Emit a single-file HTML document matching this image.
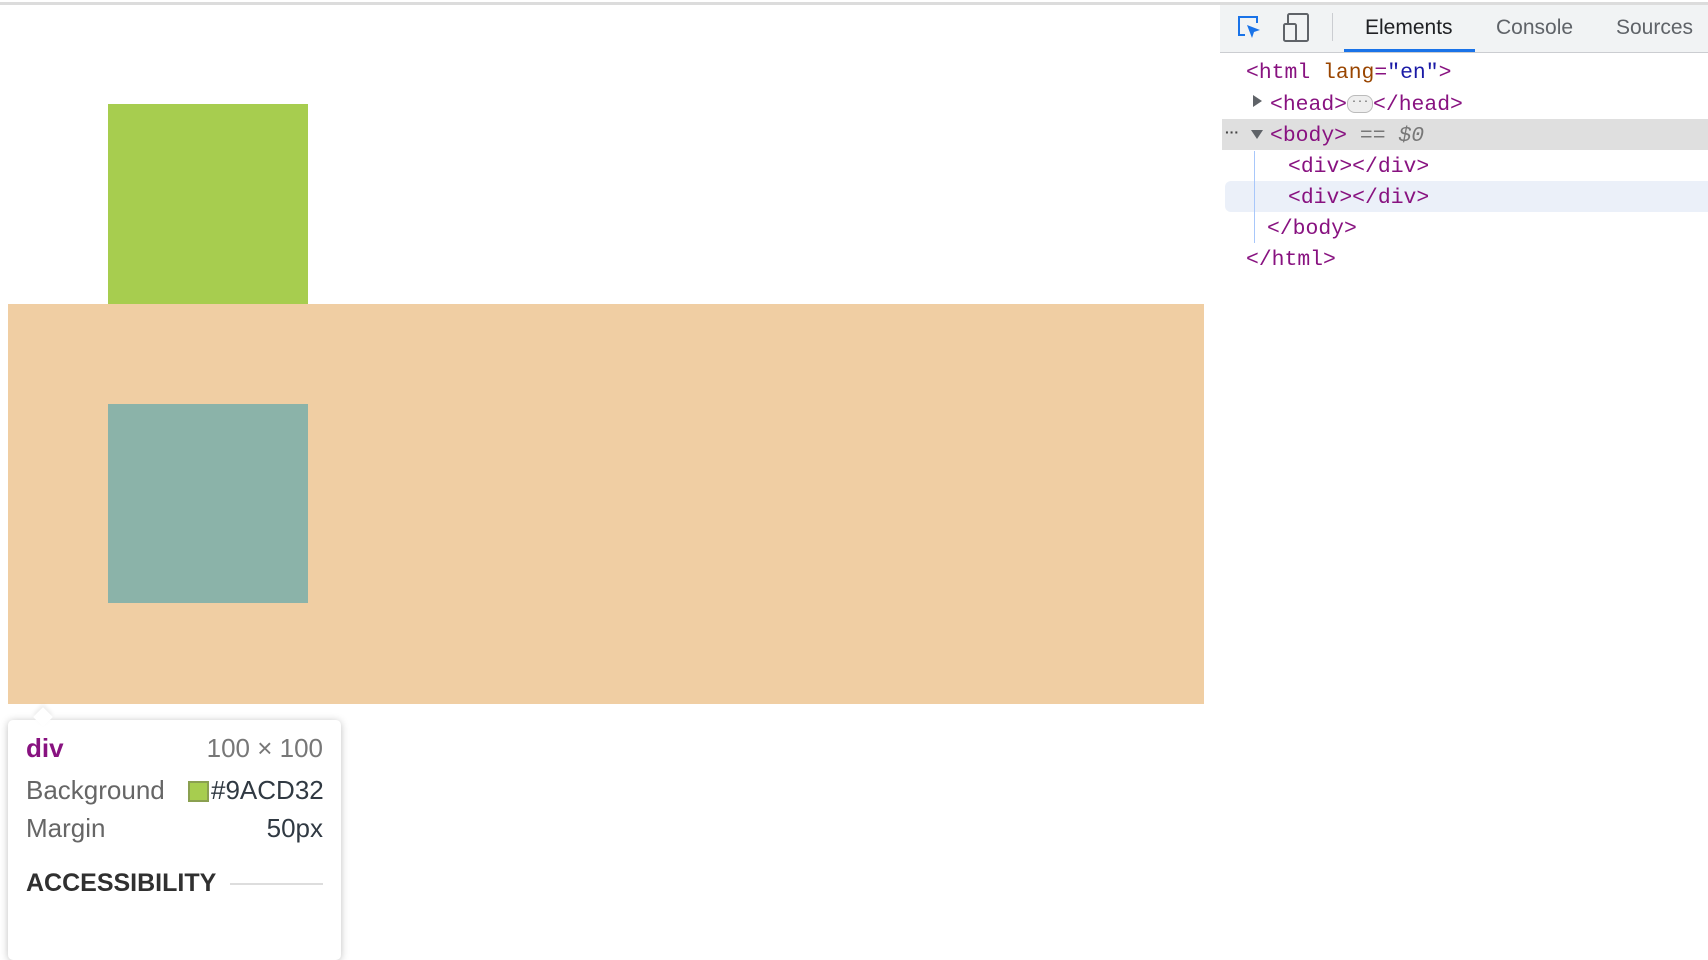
<!DOCTYPE html>
<html><head><style>
body{margin:0;width:1708px;height:898px;position:relative;overflow:hidden;background:#fff;font-family:"Liberation Sans",sans-serif}
.a{position:absolute}
.m{font-family:"Liberation Mono",monospace;font-size:21.4px;color:#881280;position:absolute;white-space:pre;line-height:31px}
</style></head><body>
<div class="a" style="left:0;top:2px;width:1708px;height:3px;background:#dcdcdc"></div>
<div class="a" style="left:108px;top:104px;width:200px;height:200px;background:#a7cd4f"></div>
<div class="a" style="left:8px;top:304px;width:1196px;height:400px;background:#f0cea3"></div>
<div class="a" style="left:108px;top:404px;width:200px;height:199px;background:#8bb3a9"></div>

<div class="a" style="left:1220px;top:5px;width:488px;height:47px;background:#f1f3f4;border-bottom:1px solid #cbcdd1"></div>
<svg class="a" style="left:1236px;top:14px" width="30" height="30" viewBox="0 0 30 30">
<path d="M9 21H3V3h18v6" fill="none" stroke="#1a73e8" stroke-width="2"/>
<path d="M11 11l13 5-6 2-2 6z" fill="#1a73e8"/></svg>
<svg class="a" style="left:1283px;top:12px" width="30" height="32" viewBox="0 0 30 32">
<rect x="5" y="2" width="20" height="27" rx="1.5" fill="none" stroke="#5f6368" stroke-width="2"/>
<rect x="1" y="12" width="12" height="17" rx="1.5" fill="#f1f3f4" stroke="#5f6368" stroke-width="2"/></svg>
<div class="a" style="left:1332px;top:13px;width:1px;height:28px;background:#cbcdd1"></div>
<div class="a" style="left:1365px;top:16px;font-size:21px;color:#202124">Elements</div>
<div class="a" style="left:1344px;top:49px;width:131px;height:3px;background:#1a73e8"></div>
<div class="a" style="left:1496px;top:16px;font-size:21px;color:#5f6368">Console</div>
<div class="a" style="left:1616px;top:16px;font-size:21px;color:#5f6368">Sources</div>

<div class="a" style="left:1222px;top:119px;width:486px;height:31px;background:#dfdfdf"></div>
<div class="a" style="left:1225px;top:181px;width:483px;height:31px;background:#ebf0f9;border-radius:6px 0 0 6px"></div>
<div class="a" style="left:1254px;top:151px;width:1px;height:92px;background:#a8c7fa"></div>

<div class="m" style="left:1246px;top:58px">&lt;html <span style="color:#994500">lang</span>=<span style="color:#1a1aa6">"en"</span>&gt;</div>
<div class="a" style="left:1253px;top:95px;width:0;height:0;border-left:9px solid #5f6368;border-top:6px solid transparent;border-bottom:6px solid transparent"></div>
<div class="m" style="left:1270px;top:90px">&lt;head&gt;<span style="display:inline-block;width:24px;height:16px;border:1px solid #bbb;border-radius:8px;background:#eee;vertical-align:middle;font-size:10px;line-height:13px;text-align:center;color:#555">···</span>&lt;/head&gt;</div>
<div class="a" style="left:1225px;top:124px;font-size:14px;color:#444;font-weight:bold">···</div>
<div class="a" style="left:1251px;top:130px;width:0;height:0;border-top:9px solid #5f6368;border-left:6px solid transparent;border-right:6px solid transparent"></div>
<div class="m" style="left:1270px;top:121px">&lt;body&gt; <span style="color:#777">== <i>$0</i></span></div>
<div class="m" style="left:1288px;top:152px">&lt;div&gt;&lt;/div&gt;</div>
<div class="m" style="left:1288px;top:183px">&lt;div&gt;&lt;/div&gt;</div>
<div class="m" style="left:1267px;top:214px">&lt;/body&gt;</div>
<div class="m" style="left:1246px;top:245px">&lt;/html&gt;</div>

<div class="a" style="left:8px;top:720px;width:333px;height:240px;background:#fff;border-radius:5px;box-shadow:0 1px 8px rgba(0,0,0,.25)"></div>
<div class="a" style="left:36px;top:710px;width:14px;height:14px;background:#fff;transform:rotate(45deg);box-shadow:-2px -2px 4px rgba(0,0,0,.08)"></div>
<div class="a" style="left:26px;top:733px;font-size:26px;font-weight:bold;color:#881280">div</div>
<div class="a" style="left:193px;top:733px;font-size:26px;color:#777;width:130px;text-align:right">100 × 100</div>
<div class="a" style="left:26px;top:775px;font-size:26px;color:#666">Background</div>
<div class="a" style="left:188px;top:781px;width:17px;height:17px;background:#a7cd4f;border:2px solid #8aa050"></div>
<div class="a" style="left:211px;top:775px;font-size:26px;color:#303942">#9ACD32</div>
<div class="a" style="left:213px;top:813px;font-size:26px;color:#303942;width:110px;text-align:right">50px</div>
<div class="a" style="left:26px;top:813px;font-size:26px;color:#666">Margin</div>
<div class="a" style="left:26px;top:869px;font-size:25px;font-weight:bold;color:#303030">ACCESSIBILITY</div>
<div class="a" style="left:230px;top:883px;width:93px;height:2px;background:#ddd"></div>
</body></html>
